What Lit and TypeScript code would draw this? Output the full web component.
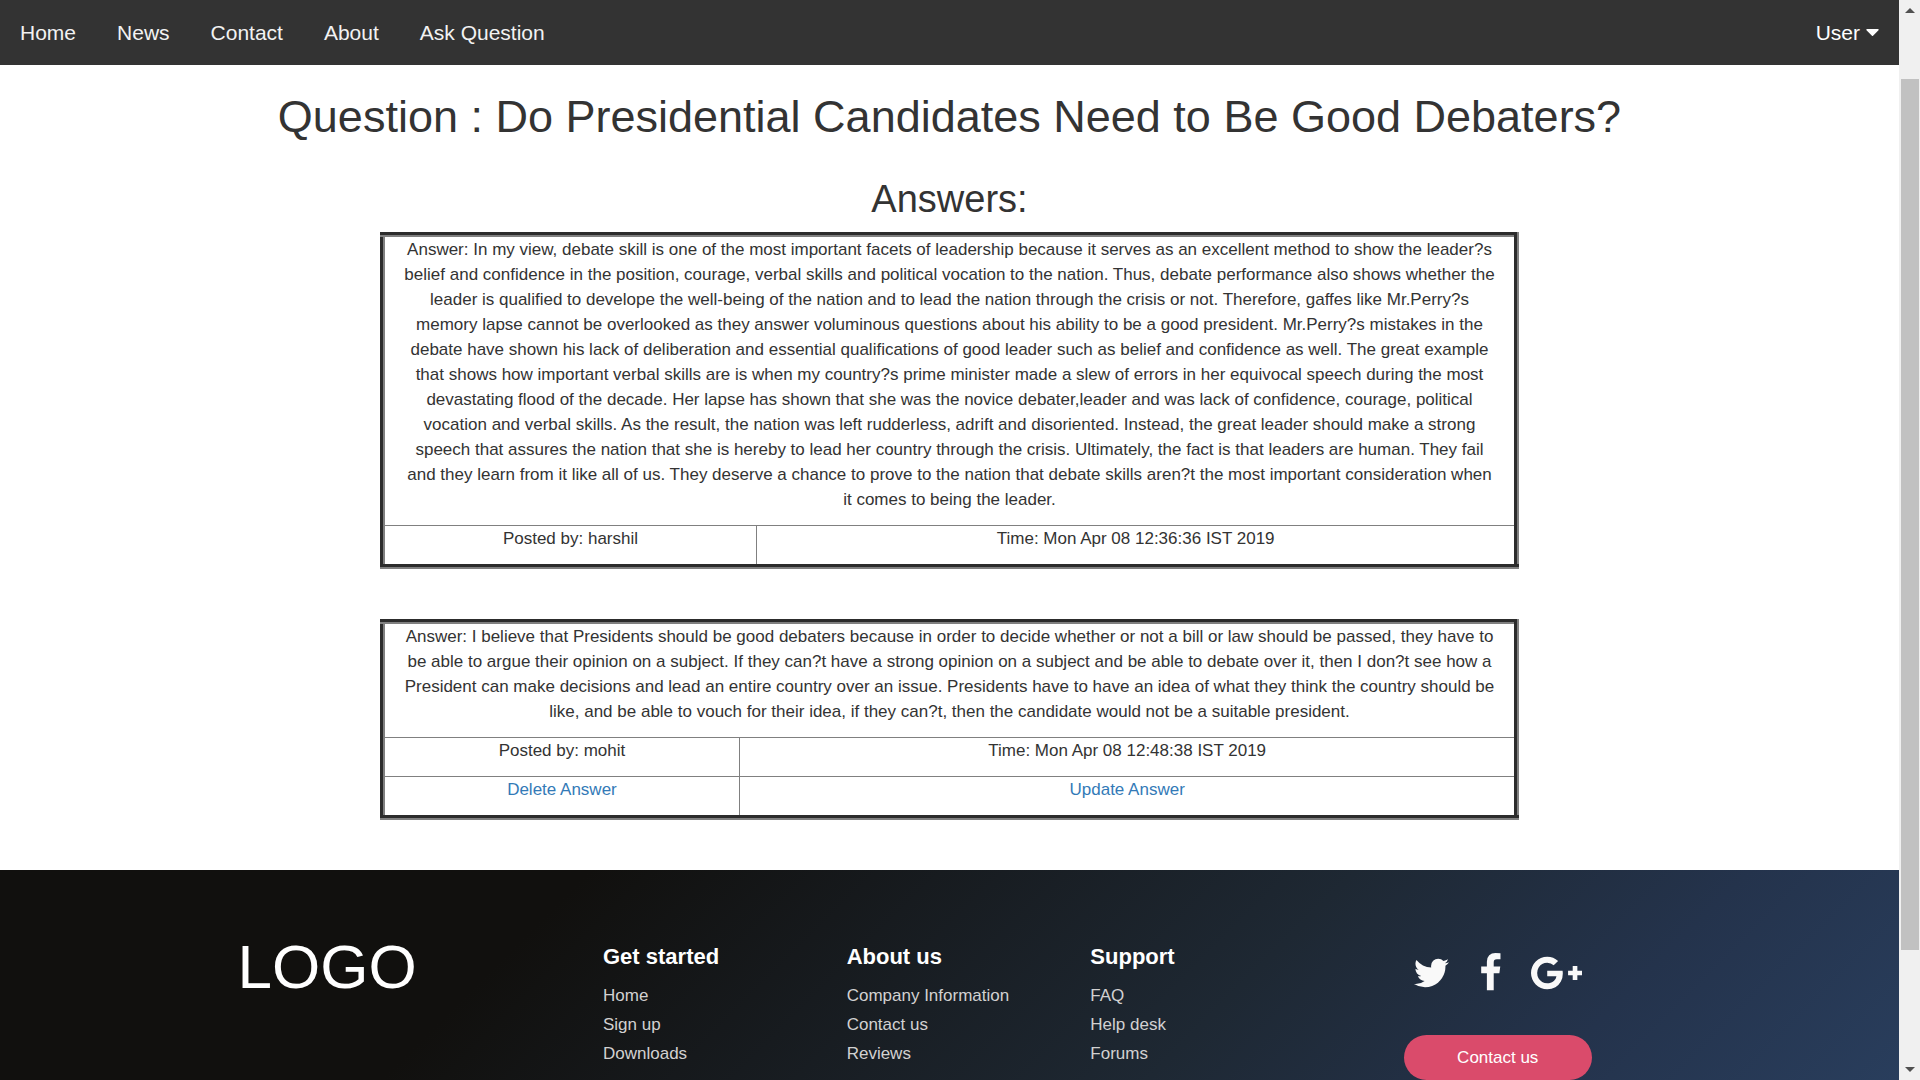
import { LitElement, html, css, svg, nothing } from "lit";
import { customElement, property } from "lit/decorators.js";
import { classMap } from "lit/directives/class-map.js";

interface Answer {
  text: string;
  author: string;
  time: string;
  own: boolean;
}

const ANSWERS: Answer[] = [
  {
    text:
      "In my view, debate skill is one of the most important facets of leadership because it serves as an excellent method to show the leader?s belief and confidence in the position, courage, verbal skills and political vocation to the nation. Thus, debate performance also shows whether the leader is qualified to develope the well-being of the nation and to lead the nation through the crisis or not. Therefore, gaffes like Mr.Perry?s memory lapse cannot be overlooked as they answer voluminous questions about his ability to be a good president. Mr.Perry?s mistakes in the debate have shown his lack of deliberation and essential qualifications of good leader such as belief and confidence as well. The great example that shows how important verbal skills are is when my country?s prime minister made a slew of errors in her equivocal speech during the most devastating flood of the decade. Her lapse has shown that she was the novice debater,leader and was lack of confidence, courage, political vocation and verbal skills. As the result, the nation was left rudderless, adrift and disoriented. Instead, the great leader should make a strong speech that assures the nation that she is hereby to lead her country through the crisis. Ultimately, the fact is that leaders are human. They fail and they learn from it like all of us. They deserve a chance to prove to the nation that debate skills aren?t the most important consideration when it comes to being the leader.",
    author: "harshil",
    time: "Mon Apr 08 12:36:36 IST 2019",
    own: false,
  },
  {
    text:
      "I believe that Presidents should be good debaters because in order to decide whether or not a bill or law should be passed, they have to be able to argue their opinion on a subject. If they can?t have a strong opinion on a subject and be able to debate over it, then I don?t see how a President can make decisions and lead an entire country over an issue. Presidents have to have an idea of what they think the country should be like, and be able to vouch for their idea, if they can?t, then the candidate would not be a suitable president.",
    author: "mohit",
    time: "Mon Apr 08 12:48:38 IST 2019",
    own: true,
  },
];

const LINK_GROUPS = [
  { title: "Get started", links: ["Home", "Sign up", "Downloads"] },
  { title: "About us", links: ["Company Information", "Contact us", "Reviews"] },
  { title: "Support", links: ["FAQ", "Help desk", "Forums"] },
];

const SOCIAL = [
  {
    name: "Twitter",
    left: 64,
    units: 1664,
    width: 37,
    d: "M1684 408q-67 98-162 167 1 14 1 42 0 130-38 259.5t-115.5 248.5-184.5 210.5-258 146-323 54.5q-271 0-496-145 35 4 78 4 225 0 401-138-105-2-188-64.5t-114-159.5q33 5 61 5 43 0 85-11-112-23-185.5-111.5t-73.5-205.5v-4q68 38 146 41-66-44-105-115t-39-154q0-88 44-163 121 149 294.5 238.5t371.5 99.5q-8-38-8-74 0-134 94.5-228.5t228.5-94.5q140 0 236 102 109-21 205-78-37 115-142 178 93-10 186-50z",
  },
  {
    name: "Facebook",
    left: 384,
    units: 1024,
    width: 23,
    d: "M1343 12v264h-157q-86 0-116 36t-30 108v189h293l-39 296h-254v759h-306v-759h-255v-296h255v-218q0-186 104-288.5t277-102.5q147 0 228 12z",
  },
  {
    name: "Google Plus",
    left: 0,
    units: 2304,
    width: 51,
    d: "M1437 913q0 208-87 370.5t-248 254-369 91.5q-149 0-285-58t-234-156-156-234-58-285 58-285 156-234 234-156 285-58q286 0 491 192l-199 191q-117-113-292-113-123 0-227.5 62t-165.5 168.5-61 232.5 61 232.5 165.5 168.5 227.5 62q83 0 152.5-23t114.5-57.5 78.5-78.5 49-83 21.5-74h-416v-252h692q12 63 12 122zm867-122v210h-210v209h-210v-209h-209v-210h209v-209h210v209h210z",
  },
];

@customElement("site-nav")
class SiteNav extends LitElement {
  static styles = css`
    :host {
      display: block;
    }
    .bar {
      display: flex;
      padding: 0 20px;
      gap: 41px;
      background: #333;
      font-size: 21px;
      line-height: 65px;
    }
    .link {
      color: #f2f2f2;
      text-decoration: none;
    }
    .user {
      display: flex;
      align-items: center;
      gap: 6px;
      margin: 0 0 0 auto;
      padding: 0;
      border: 0;
      background: none;
      color: #fff;
      font: inherit;
      cursor: pointer;
    }
  `;

  render() {
    return html`
      <nav class="bar">
        ${["Home", "News", "Contact", "About", "Ask Question"].map(
          (label) => html`<a class="link" href="#">${label}</a>`
        )}
        <button class="user" type="button">
          User
          <svg width="13" height="7" viewBox="384 640 1024 576" aria-hidden="true">
            <path
              fill="currentColor"
              d="M1408 704q0 26-19 45l-448 448q-19 19-45 19t-45-19l-448-448q-19-19-19-45t19-45 45-19h896q26 0 45 19t19 45z"
            />
          </svg>
        </button>
      </nav>
    `;
  }
}

@customElement("answer-card")
class AnswerCard extends LitElement {
  @property({ attribute: false }) answer!: Answer;

  static styles = css`
    :host {
      display: block;
    }
    .card {
      width: 60%;
      margin: 0 auto 50px;
      border: 5px groove gray;
      border-collapse: collapse;
      table-layout: fixed;
      text-align: center;
    }
    .author-col {
      width: 33%;
    }
    .own .author-col {
      width: 31.5%;
    }
    .cell {
      padding: 0;
      border: 1px solid gray;
    }
    .body {
      padding: 0 17px;
    }
    .text {
      margin: 0 0 13px;
    }
    .link {
      color: #337ab7;
      text-decoration: none;
    }
  `;

  render() {
    const { text, author, time, own } = this.answer;
    return html`
      <table class=${classMap({ card: true, own })}>
        <colgroup>
          <col class="author-col" />
          <col />
        </colgroup>
        <tbody>
          <tr>
            <td class="cell body" colspan="2"><p class="text">${`Answer: ${text}`}</p></td>
          </tr>
          <tr>
            <td class="cell"><p class="text">${`Posted by: ${author}`}</p></td>
            <td class="cell"><p class="text">${`Time: ${time}`}</p></td>
          </tr>
          ${own
            ? html`<tr>
                <td class="cell"><p class="text"><a class="link" href="#">Delete Answer</a></p></td>
                <td class="cell"><p class="text"><a class="link" href="#">Update Answer</a></p></td>
              </tr>`
            : nothing}
        </tbody>
      </table>
    `;
  }
}

@customElement("site-footer")
class SiteFooter extends LitElement {
  static styles = css`
    :host {
      display: block;
      background: linear-gradient(135deg, #11100e 27%, #1e2833 62%, #24334c 80%, #2a4060 100%);
      color: #fff;
    }
    .inner {
      display: grid;
      grid-template-columns: 3fr 2fr 2fr 2fr 3fr;
      max-width: 1462px;
      margin: 0 auto;
      padding: 62px 0 80px;
    }
    .column {
      padding: 0 19px;
    }
    .logo {
      margin: 0;
      font-size: 62px;
      font-weight: 400;
      line-height: 69px;
    }
    .title {
      margin: 12px 0 14px;
      font-size: 22px;
      font-weight: 700;
      line-height: 25px;
    }
    .list {
      display: grid;
      gap: 4px;
      margin: 0;
      padding: 0;
      list-style: none;
    }
    .link {
      color: #d2d1d1;
      text-decoration: none;
    }
    .social {
      display: flex;
      justify-content: center;
      gap: 29px;
      padding: 21px 0 42px;
    }
    .icon {
      display: block;
      color: #f9f9f9;
    }
    .contact {
      display: block;
      width: 188px;
      height: 45px;
      margin: 0 auto;
      padding: 0;
      border: 0;
      border-radius: 23px;
      background: #da4b6b;
      color: #fff;
      font: inherit;
      cursor: pointer;
    }
  `;

  render() {
    return html`
      <footer class="inner">
        <div class="column"><h2 class="logo">LOGO</h2></div>
        ${LINK_GROUPS.map(
          (group) => html`
            <div class="column">
              <h5 class="title">${group.title}</h5>
              <ul class="list">
                ${group.links.map((label) => html`<li><a class="link" href="#">${label}</a></li>`)}
              </ul>
            </div>
          `
        )}
        <div class="column">
          <div class="social">
            ${SOCIAL.map(
              (item) => html`
                <a class="icon" href="#" aria-label=${item.name}>
                  <svg class="icon" width=${item.width} height="40" viewBox="${item.left} 0 ${item.units} 1792">
                    ${svg`<path fill="currentColor" d=${item.d} />`}
                  </svg>
                </a>
              `
            )}
          </div>
          <button class="contact" type="button">Contact us</button>
        </div>
      </footer>
    `;
  }
}

@customElement("scroll-rail")
class ScrollRail extends LitElement {
  static styles = css`
    :host {
      display: grid;
      grid-template-rows: 21px 1fr 21px;
      background: #f0f0f0;
    }
    .arrow {
      place-self: center;
      fill: #505050;
    }
    .track {
      padding: 58px 1px 109px 2px;
      display: grid;
    }
    .thumb {
      background: #c1c1c1;
    }
  `;

  render() {
    return html`
      <svg class="arrow" width="10" height="5" viewBox="0 0 10 5"><path d="M0 5L5 0L10 5z" /></svg>
      <div class="track"><div class="thumb"></div></div>
      <svg class="arrow" width="10" height="5" viewBox="0 0 10 5"><path d="M0 0L5 5L10 0z" /></svg>
    `;
  }
}

@customElement("app-root")
class AppRoot extends LitElement {
  static styles = css`
    :host {
      display: grid;
      grid-template-columns: 1fr 21px;
      height: 100vh;
      overflow: hidden;
      background: #fff;
      color: #333;
      font-family: "Liberation Sans", Arial, sans-serif;
      font-size: 17px;
      line-height: 25px;
    }
    .page {
      min-width: 0;
      overflow: hidden;
    }
    .question {
      margin: 27px 0 37px;
      font-size: 45px;
      font-weight: 400;
      line-height: 50px;
      text-align: center;
    }
    .heading {
      margin: 0 0 12px;
      font-size: 38px;
      font-weight: 400;
      line-height: 41px;
      text-align: center;
    }
  `;

  render() {
    return html`
      <div class="page">
        <site-nav></site-nav>
        <main>
          <h1 class="question">Question : Do Presidential Candidates Need to Be Good Debaters?</h1>
          <h2 class="heading">Answers:</h2>
          ${ANSWERS.map((answer) => html`<answer-card .answer=${answer}></answer-card>`)}
        </main>
        <site-footer></site-footer>
      </div>
      <scroll-rail aria-hidden="true"></scroll-rail>
    `;
  }
}
